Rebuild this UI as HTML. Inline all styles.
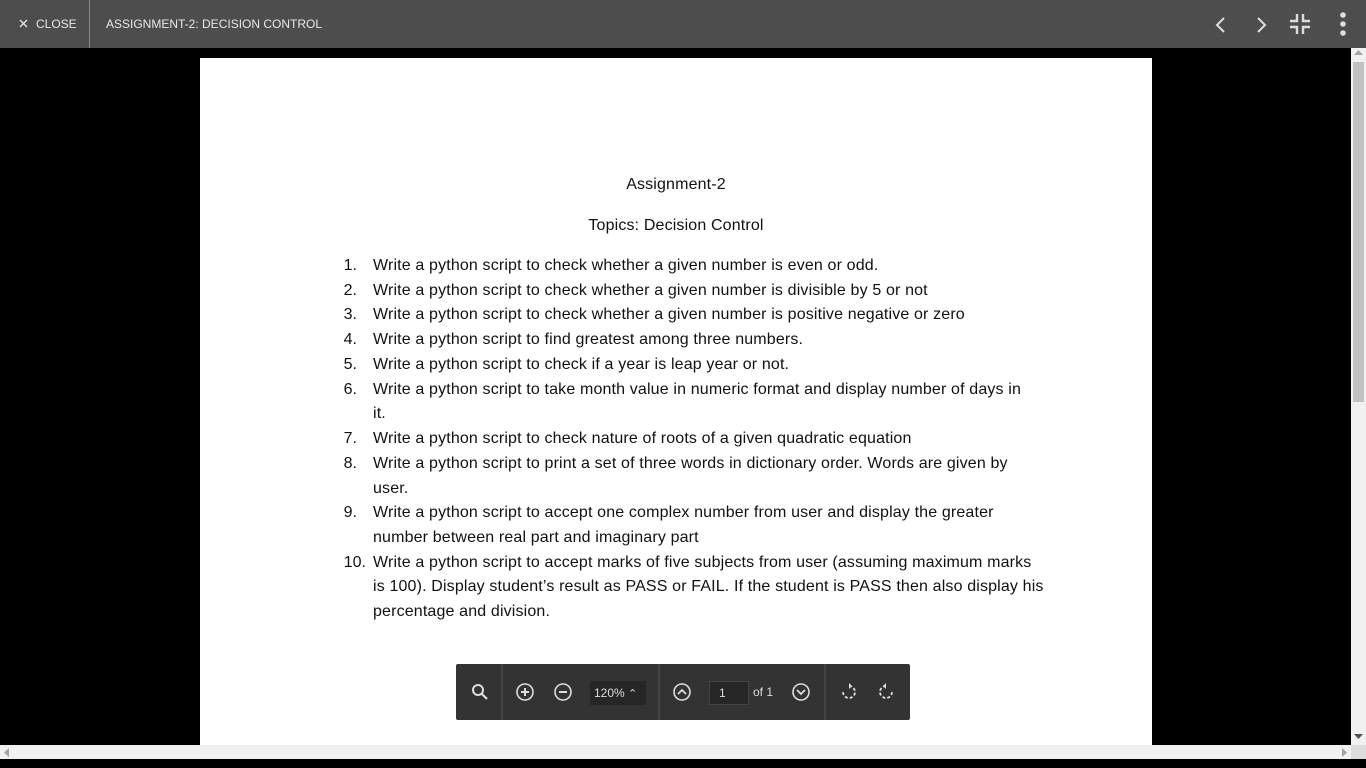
<!DOCTYPE html>
<html><head><meta charset="utf-8"><style>
*{margin:0;padding:0;box-sizing:border-box}
body{width:1366px;height:768px;background:#000;position:relative;overflow:hidden;font-family:"Liberation Sans",sans-serif}
.top{position:absolute;left:0;top:0;width:1366px;height:48px;background:#4d4d4d;color:#e8e8e8;font-size:12px}
.page{position:absolute;left:200px;top:58px;width:952px;height:687px;background:#fff}
.l{position:absolute;white-space:nowrap;font-size:16px;letter-spacing:0.15px;color:#111;line-height:18px}
.n{position:absolute;white-space:nowrap;font-size:16px;color:#111;line-height:18px;text-align:right;width:30px}
.tb{position:absolute;left:456px;top:664px;width:454px;height:56px;background:#333;border-radius:2px}
.div{position:absolute;top:0;width:2px;height:56px;background:#444}
.ic{position:absolute;top:18px}
</style></head><body>
<div class="top">
 <div style="position:absolute;left:89px;top:0;width:1px;height:48px;background:#888"></div>
 <svg style="position:absolute;left:19px;top:19px" width="9" height="9"><path d="M1 1L8 8M8 1L1 8" stroke="#e8e8e8" stroke-width="1.3"/></svg>
 <div style="position:absolute;left:36px;top:17px">CLOSE</div>
 <div style="position:absolute;left:106px;top:17px">ASSIGNMENT-2: DECISION CONTROL</div>
 <svg style="position:absolute;left:1214px;top:16px" width="14" height="18"><path d="M10 2L3 9L10 16" stroke="#ddd" stroke-width="2" fill="none"/></svg>
 <svg style="position:absolute;left:1254px;top:16px" width="14" height="18"><path d="M4 2L11 9L4 16" stroke="#ddd" stroke-width="2" fill="none"/></svg>
 <svg style="position:absolute;left:1289px;top:13px" width="22" height="22"><path d="M8 1V8H1M14 1V8H21M8 21V14H1M14 21V14H21" stroke="#ddd" stroke-width="2.4" fill="none"/></svg>
 <svg style="position:absolute;left:1338px;top:11px" width="10" height="26"><circle cx="5" cy="4" r="2.8" fill="#ddd"/><circle cx="5" cy="13" r="2.8" fill="#ddd"/><circle cx="5" cy="22" r="2.8" fill="#ddd"/></svg>
</div>
<div class="page"></div>
<div class="l" style="left:0;width:1352px;text-align:center;top:176px">Assignment-2</div>
<div class="l" style="left:0;width:1352px;text-align:center;top:217px">Topics: Decision Control</div>
<div class="n" style="left:327px;top:257px">1.</div><div class="l" style="left:373px;top:257px">Write a python script to check whether a given number is even or odd.</div>
<div class="n" style="left:327px;top:282px">2.</div><div class="l" style="left:373px;top:282px">Write a python script to check whether a given number is divisible by 5 or not</div>
<div class="n" style="left:327px;top:306px">3.</div><div class="l" style="left:373px;top:306px">Write a python script to check whether a given number is positive negative or zero</div>
<div class="n" style="left:327px;top:331px">4.</div><div class="l" style="left:373px;top:331px">Write a python script to find greatest among three numbers.</div>
<div class="n" style="left:327px;top:356px">5.</div><div class="l" style="left:373px;top:356px">Write a python script to check if a year is leap year or not.</div>
<div class="n" style="left:327px;top:381px">6.</div><div class="l" style="left:373px;top:381px">Write a python script to take month value in numeric format and display number of days in</div>
<div class="l" style="left:373px;top:405px">it.</div>
<div class="n" style="left:327px;top:430px">7.</div><div class="l" style="left:373px;top:430px">Write a python script to check nature of roots of a given quadratic equation</div>
<div class="n" style="left:327px;top:455px">8.</div><div class="l" style="left:373px;top:455px">Write a python script to print a set of three words in dictionary order. Words are given by</div>
<div class="l" style="left:373px;top:480px">user.</div>
<div class="n" style="left:327px;top:504px">9.</div><div class="l" style="left:373px;top:504px">Write a python script to accept one complex number from user and display the greater</div>
<div class="l" style="left:373px;top:529px">number between real part and imaginary part</div>
<div class="n" style="left:336px;top:554px">10.</div><div class="l" style="left:373px;top:554px">Write a python script to accept marks of five subjects from user (assuming maximum marks</div>
<div class="l" style="left:373px;top:578px">is 100). Display student’s result as PASS or FAIL. If the student is PASS then also display his</div>
<div class="l" style="left:373px;top:603px">percentage and division.</div>

<div class="tb">
 <div class="div" style="left:45px"></div><div class="div" style="left:202px"></div><div class="div" style="left:368px"></div>
 <svg class="ic" style="left:14px" width="20" height="20"><circle cx="8" cy="8" r="5" stroke="#ddd" stroke-width="2" fill="none"/><path d="M12 12L17 17" stroke="#ddd" stroke-width="2.2"/></svg>
 <svg class="ic" style="left:59px" width="20" height="20"><circle cx="10" cy="10" r="8" stroke="#ddd" stroke-width="1.6" fill="none"/><path d="M10 6V14M6 10H14" stroke="#ddd" stroke-width="2"/></svg>
 <svg class="ic" style="left:97px" width="20" height="20"><circle cx="10" cy="10" r="8" stroke="#ddd" stroke-width="1.6" fill="none"/><path d="M6 10H14" stroke="#ddd" stroke-width="2"/></svg>
 <div style="position:absolute;left:134px;top:17px;width:56px;height:24px;background:#262626;color:#ddd;font-size:12px;line-height:24px;padding-left:4px">120% <span style="font-size:11px">⌃</span></div>
 <svg class="ic" style="left:216px" width="20" height="20"><circle cx="10" cy="10" r="8" stroke="#ddd" stroke-width="1.6" fill="none"/><path d="M6 12L10 8L14 12" stroke="#ddd" stroke-width="1.8" fill="none"/></svg>
 <div style="position:absolute;left:253px;top:17px;width:40px;height:24px;background:#262626;border:1px solid #444;color:#ddd;font-size:12px;line-height:22px;padding-left:9px">1</div>
 <div style="position:absolute;left:297px;top:21px;color:#ddd;font-size:12px">of 1</div>
 <svg class="ic" style="left:335px" width="20" height="20"><circle cx="10" cy="10" r="8" stroke="#ddd" stroke-width="1.6" fill="none"/><path d="M6 8L10 12L14 8" stroke="#ddd" stroke-width="1.8" fill="none"/></svg>
 <svg class="ic" style="left:383px" width="20" height="20"><path d="M10 4A6 6 0 1 1 4 10" stroke="#ddd" stroke-width="1.8" fill="none" stroke-dasharray="3 2"/><path d="M10 1L10 7L13 4Z" fill="#ddd"/></svg>
 <svg class="ic" style="left:420px" width="20" height="20"><path d="M10 4A6 6 0 1 0 16 10" stroke="#ddd" stroke-width="1.8" fill="none" stroke-dasharray="3 2"/><path d="M10 1L10 7L7 4Z" fill="#ddd"/></svg>
</div>

<div style="position:absolute;left:1351px;top:48px;width:15px;height:697px;background:#f1f1f1"></div>
<div style="position:absolute;left:1353px;top:62px;width:11px;height:340px;background:#c1c1c1"></div>
<svg style="position:absolute;left:1354px;top:50px" width="9" height="6"><path d="M0 5L4.5 0L9 5Z" fill="#a3a3a3"/></svg>
<svg style="position:absolute;left:1354px;top:734px" width="9" height="6"><path d="M0 0L4.5 5L9 0Z" fill="#505050"/></svg>
<div style="position:absolute;left:0;top:745px;width:1351px;height:14px;background:#f1f1f1"></div>
<div style="position:absolute;left:1351px;top:745px;width:15px;height:14px;background:#dcdcdc"></div>
<svg style="position:absolute;left:4px;top:748px" width="6" height="9"><path d="M5 0L0 4.5L5 9Z" fill="#a3a3a3"/></svg>
<svg style="position:absolute;left:1342px;top:748px" width="6" height="9"><path d="M0 0L5 4.5L0 9Z" fill="#a3a3a3"/></svg>
</body></html>
